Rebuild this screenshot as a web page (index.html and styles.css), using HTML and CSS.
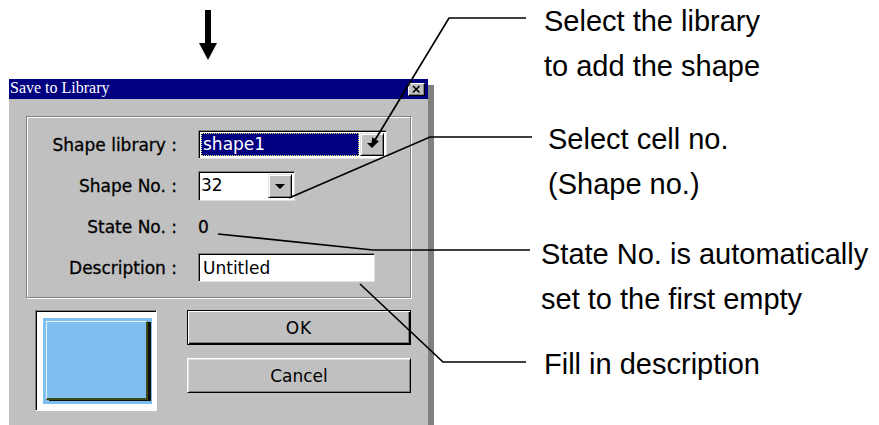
FILE: index.html
```html
<!DOCTYPE html>
<html>
<head>
<meta charset="utf-8">
<link rel="stylesheet" href="styles.css">
</head>
<body>
<div class="page">
  <div class="left">
    <div class="arrow-zone">
      <svg class="down-arrow" width="18" height="50" viewBox="0 0 18 50"><rect x="6" y="0" width="6" height="34"/><polygon points="0,33 18,33 9,50"/></svg>
    </div>
    <div class="dialog">
      <div class="titlebar">
        <span class="title">Save to Library</span>
        <span class="close-btn"><svg width="15" height="11" viewBox="0 0 15 11"><path d="M4 2 L10.5 8.5 M10.5 2 L4 8.5" stroke="#000" stroke-width="1.7" fill="none"/></svg></span>
      </div>
      <div class="dialog-body">
        <div class="groupbox">
          <div class="form-grid">
            <div class="field-label">Shape library :</div>
            <div class="combo combo-lib">
              <div class="combo-value selected">shape1</div>
              <div class="combo-btn"><span class="tri"></span></div>
            </div>
            <div class="field-label">Shape No. :</div>
            <div class="combo combo-num">
              <div class="combo-value">32</div>
              <div class="combo-btn"><span class="tri"></span></div>
            </div>
            <div class="field-label">State No. :</div>
            <div class="static-value">0</div>
            <div class="field-label">Description :</div>
            <div class="textbox">Untitled</div>
          </div>
        </div>
        <div class="bottom-row">
          <div class="preview-frame">
            <div class="swatch"><div class="swatch-bevel"></div></div>
          </div>
          <div class="buttons">
            <div class="btn btn-default">OK</div>
            <div class="btn">Cancel</div>
          </div>
        </div>
      </div>
    </div>
  </div>
  <div class="notes">
    <p class="note note-1">Select the library<br>to add the shape</p>
    <p class="note note-2">Select cell no.<br>(Shape no.)</p>
    <p class="note note-3">State No. is automatically<br>set to the first empty</p>
    <p class="note note-4">Fill in description</p>
  </div>
  <svg class="callouts" width="879" height="425" viewBox="0 0 879 425">
    <g stroke="#000" stroke-width="1.7" fill="none">
      <polyline points="526,18 449,18 375,140"/>
      <polyline points="532,137 430,137 289,198"/>
      <polyline points="218,234 373,250 530,250"/>
      <polyline points="360,284 443,362 526,362"/>
    </g>
    <polygon points="371,147 379,141.4 372.2,137.2" fill="#000"/>
  </svg>
</div>
</body>
</html>
```
FILE: styles.css
```css
html, body {
  margin: 0;
  padding: 0;
  background: #fff;
}

.page {
  position: relative;
  display: flex;
  width: 879px;
  height: 425px;
  overflow: hidden;
  background: #fff;
}

.left {
  width: 434px;
  flex: none;
}

.arrow-zone {
  box-sizing: border-box;
  height: 79px;
  padding-top: 10px;
}

.down-arrow {
  display: block;
  margin-left: 199px;
  fill: #000;
}

.dialog {
  margin-left: 9px;
  width: 419px;
  background: #c0c0c0;
  box-shadow: 6px 6px 0 #808080;
  font-family: "DejaVu Sans", sans-serif;
  font-size: 17px;
  color: #000;
}

.titlebar {
  display: flex;
  justify-content: space-between;
  align-items: flex-start;
  height: 20px;
  background: #000080;
}

.title {
  font-family: "Liberation Serif", serif;
  font-size: 16px;
  line-height: 18px;
  color: #fff;
  padding-left: 1px;
}

.close-btn {
  display: flex;
  box-sizing: border-box;
  width: 17px;
  height: 13px;
  margin: 4px 3px 0 0;
  background: #c0c0c0;
  border: 1px solid;
  border-color: #fff #000 #000 #fff;
  box-shadow: inset -1px -1px 0 #808080;
}

.dialog-body {
  padding: 17px;
}

.groupbox {
  box-sizing: border-box;
  width: 385px;
  height: 182px;
  border: 1px solid #808080;
  box-shadow: inset 1px 1px 0 #fff, 1px 1px 0 #fff;
  padding-top: 13px;
}

.form-grid {
  display: grid;
  grid-template-columns: 150px auto;
  grid-auto-rows: 29px;
  column-gap: 21px;
  row-gap: 12px;
}

.field-label {
  text-align: right;
  align-self: center;
  white-space: nowrap;
  -webkit-text-stroke: 0.3px #000;
}

.combo {
  display: flex;
  box-sizing: border-box;
  height: 29px;
  padding: 2px;
  background: #fff;
  border: 1px solid;
  border-color: #808080 #dfdfdf #dfdfdf #808080;
  box-shadow: inset 1px 1px 0 #000;
  justify-self: start;
  align-self: center;
}

.combo-lib {
  width: 189px;
}

.combo-num {
  width: 97px;
  height: 30px;
}

.combo-value {
  flex: 1;
  display: flex;
  align-items: center;
  line-height: 1;
}

.combo-value.selected {
  margin-right: 1px;
  background: #000080;
  color: #fff;
  border: 1px dotted #e8e880;
  padding-left: 1px;
}

.combo-btn {
  box-sizing: border-box;
  width: 24px;
  display: flex;
  align-items: center;
  justify-content: center;
  background: #c0c0c0;
  border: 1px solid;
  border-color: #dfdfdf #000 #000 #dfdfdf;
  box-shadow: inset 1px 1px 0 #fff, inset -1px -1px 0 #808080;
}

.tri {
  width: 0;
  height: 0;
  border-left: 5px solid transparent;
  border-right: 5px solid transparent;
  border-top: 5px solid #000;
  margin-top: 2px;
}

.static-value {
  align-self: center;
  -webkit-text-stroke: 0.3px #000;
}

.textbox {
  box-sizing: border-box;
  width: 177px;
  height: 29px;
  padding: 0 4px;
  display: flex;
  align-items: center;
  background: #fff;
  border: 1px solid;
  border-color: #808080 #dfdfdf #dfdfdf #808080;
  box-shadow: inset 1px 1px 0 #000;
  align-self: center;
}

.bottom-row {
  display: flex;
  margin-top: 12px;
}

.preview-frame {
  box-sizing: border-box;
  width: 122px;
  height: 101px;
  margin-left: 9px;
  padding: 7px 0 0 7px;
  background: #fff;
  border: 1px solid;
  border-color: #808080 #fff #fff #808080;
  box-shadow: inset 1px 1px 0 #000;
}

.swatch {
  box-sizing: border-box;
  width: 109px;
  height: 86px;
  padding: 3px 0 0 3px;
  background: #7fbfef;
}

.swatch-bevel {
  box-sizing: border-box;
  width: 102px;
  height: 79px;
  border-style: solid;
  border-width: 1px 2px 2px 1px;
  border-color: #e6f2fc #3c4a18 #3c4a18 #e6f2fc;
  box-shadow: 3px 1px 0 #101010;
}

.buttons {
  margin-left: auto;
  width: 224px;
  display: flex;
  flex-direction: column;
  gap: 13px;
}

.btn {
  box-sizing: border-box;
  height: 35px;
  display: flex;
  align-items: center;
  justify-content: center;
  border: 1px solid;
  border-color: #fff #000 #000 #fff;
  box-shadow: inset 1px 1px 0 #dfdfdf, inset -1px -1px 0 #808080;
}

.btn-default {
  border-color: #000;
  box-shadow: inset 1px 1px 0 #fff, inset -1px -1px 0 #000, inset -2px -2px 0 #808080;
  letter-spacing: 1px;
}

.notes {
  margin-left: 110px;
  font-family: "Liberation Sans", Arial, sans-serif;
  font-size: 29px;
  line-height: 45px;
  color: #000;
}

.note {
  margin: 0;
  white-space: nowrap;
}

.note-1 {
  margin-top: -1px;
}

.note-2 {
  margin-top: 28px;
  margin-left: 4px;
}

.note-3 {
  margin-top: 25px;
  margin-left: -3px;
}

.note-4 {
  margin-top: 20px;
}

.callouts {
  position: absolute;
  left: 0;
  top: 0;
  pointer-events: none;
}
```
